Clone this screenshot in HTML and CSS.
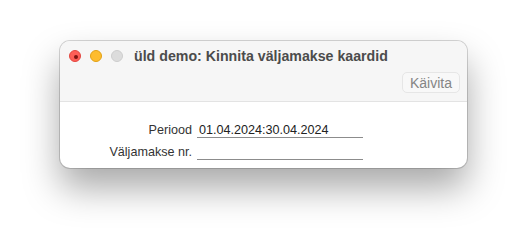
FILE: index.html
```html
<!DOCTYPE html>
<html lang="et">
<head>
    <meta charset="UTF-8">
    <meta name="viewport" content="width=device-width, initial-scale=1.0">
    <title>Kinnita väljamakse kaardid</title>
    <link rel="stylesheet" href="styles.css">
</head>
<body>
    <div class="window">
        <div class="header">
            <div class="titlebar">
                <div class="lights">
                    <span class="light close"></span>
                    <span class="light minimize"></span>
                    <span class="light zoom"></span>
                </div>
                <div class="title">üld demo: Kinnita väljamakse kaardid</div>
            </div>
            <div class="toolbar">
                <button class="run" type="button">Käivita</button>
            </div>
        </div>

        <form class="form">
            <div class="row">
                <label>Periood</label>
                <div class="field">01.04.2024:30.04.2024</div>
            </div>
            <div class="row">
                <label>Väljamakse nr.</label>
                <div class="field"></div>
            </div>
        </form>
    </div>
</body>
</html>
```

FILE: styles.css
```css
* {
    margin: 0;
    padding: 0;
    box-sizing: border-box;
    font-family: 'Liberation Sans', Arial, sans-serif;
}

body {
    background: #fff;
    padding: 41px 0 0 60px;
    height: 248px;
    overflow: hidden;
}

.window {
    width: 407px;
    height: 127px;
    background: #fff;
    border-radius: 10px;
    overflow: hidden;
    box-shadow: 0 0 0 1px rgba(0, 0, 0, 0.16),
                0 20px 36px rgba(0, 0, 0, 0.34);
}

.header {
    height: 61px;
    background: #f6f6f6;
    border-bottom: 1px solid #e3e3e3;
}

.titlebar {
    display: flex;
    align-items: center;
    height: 30px;
    padding-left: 9px;
}

.lights {
    display: flex;
    gap: 9px;
    margin-right: 11px;
}

.light {
    width: 12px;
    height: 12px;
    border-radius: 50%;
    position: relative;
}

.light.close {
    background: #fe5f57;
    border: 0.5px solid #e2463f;
}

.light.close::after {
    content: '';
    position: absolute;
    left: 3.5px;
    top: 3.5px;
    width: 4px;
    height: 4px;
    border-radius: 50%;
    background: #7d1512;
}

.light.minimize {
    background: #febc2e;
    border: 0.5px solid #e1a116;
}

.light.zoom {
    background: #dcdcdc;
    border: 0.5px solid #cdcdcd;
}

.title {
    font-size: 14.2px;
    font-weight: bold;
    color: #4c4c4c;
}

.toolbar {
    display: flex;
    justify-content: flex-end;
    padding: 1px 7px 0 0;
}

.run {
    height: 21px;
    padding: 0 7px;
    font-size: 14px;
    color: #858585;
    background: #f8f8f8;
    border: 1px solid #e6e6e6;
    border-radius: 5px;
}

.form {
    padding-top: 14px;
}

.row {
    display: flex;
    align-items: flex-end;
    height: 22px;
}

.row label {
    width: 137px;
    text-align: right;
    font-size: 12.6px;
    color: #333;
    padding-right: 5px;
    padding-bottom: 1px;
}

.field {
    width: 166px;
    height: 15px;
    border-bottom: 1px solid #8c8c8c;
    font-size: 12.6px;
    line-height: 14px;
    color: #222;
    padding-left: 2px;
}
```
